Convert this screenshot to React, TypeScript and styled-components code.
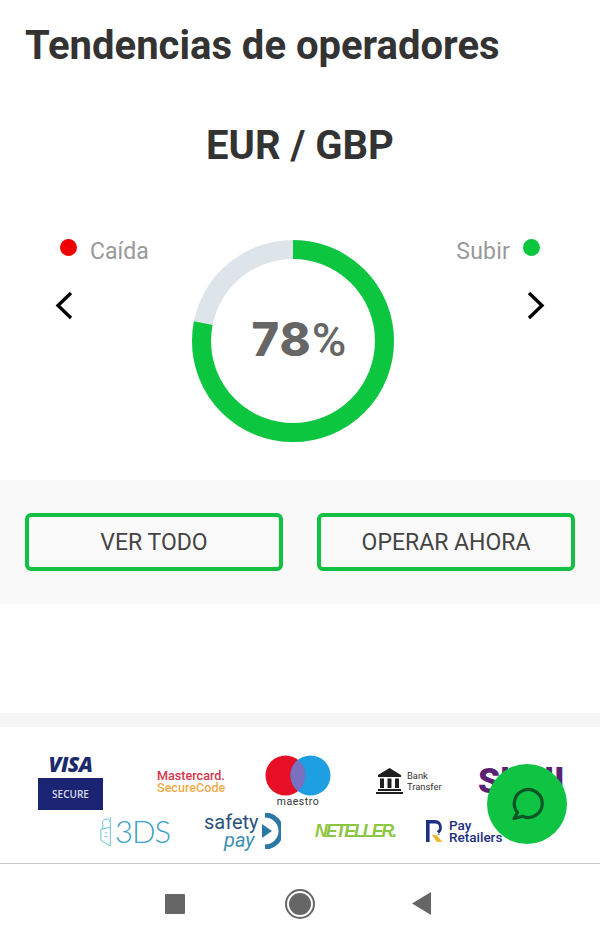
import React from "react";
import styled, { createGlobalStyle } from "styled-components";

const GlobalStyle = createGlobalStyle`
  html, body {
    margin: 0;
    padding: 0;
    background: #fff;
  }
  body {
    font-family: Roboto, "Liberation Sans", sans-serif;
  }
`;

const Page = styled.div`
  position: relative;
  width: 600px;
  height: 943px;
  overflow: hidden;
  display: flex;
  flex-direction: column;
  background: #fff;
`;

const PageTitle = styled.h1`
  margin: 0;
  height: 90px;
  padding-left: 25px;
  font-size: 40px;
  line-height: 92px;
  font-weight: 700;
  color: #333;
  white-space: nowrap;
`;

const PairName = styled.h2`
  margin: 0;
  height: 110px;
  font-size: 40px;
  line-height: 112px;
  font-weight: 700;
  color: #333;
  text-align: center;
`;

const TrendRow = styled.section`
  height: 280px;
  padding-top: 40px;
  box-sizing: border-box;
  display: grid;
  grid-template-columns: 192px 202px 1fr;
`;

const Side = styled.div<{ $right?: boolean }>`
  display: flex;
  flex-direction: column;
  align-items: ${({ $right }) => ($right ? "flex-end" : "flex-start")};
  padding: ${({ $right }) => ($right ? "0 54px 0 0" : "0 0 0 54px")};
`;

const Legend = styled.div<{ $right?: boolean }>`
  display: flex;
  align-items: center;
  gap: 13px;
  height: 22px;
  padding: ${({ $right }) => ($right ? "0 6px 0 0" : "0 0 0 6px")};
  margin-bottom: 28px;
  font-size: 23px;
  letter-spacing: ${({ $right }) => ($right ? "0.2px" : "0")};
  color: #999;
`;

const Dot = styled.span<{ $color: string }>`
  width: 17px;
  height: 17px;
  margin-top: -8px;
  border-radius: 50%;
  background: ${({ $color }) => $color};
`;

const Arrow = styled.svg`
  width: 20px;
  height: 30px;
  fill: none;
  stroke: #000;
  stroke-width: 3.4;
`;

const Gauge = styled.div`
  position: relative;
  width: 202px;
  height: 202px;
`;

const GaugeValue = styled.span`
  position: absolute;
  top: 0;
  left: 6px;
  width: 100%;
  line-height: 198px;
  text-align: center;
  font-family: Inter, Roboto, sans-serif;
  font-size: 47px;
  font-weight: 800;
  letter-spacing: 1px;
  color: #666;
`;

const GaugePercent = styled.span`
  font-family: Roboto, sans-serif;
  font-size: 47px;
  font-weight: 500;
  letter-spacing: 0;
`;

const ActionBand = styled.section`
  height: 124px;
  padding: 33px 25px 0;
  box-sizing: border-box;
  display: grid;
  grid-template-columns: 258px 258px;
  justify-content: space-between;
  align-items: start;
  background: #f9f9f9;
`;

const ActionButton = styled.button`
  height: 58px;
  padding: 0;
  border: 4px solid #14c044;
  border-radius: 6px;
  background: #fafafa;
  font-family: Roboto, "Liberation Sans", sans-serif;
  font-size: 23px;
  color: #444;
`;

const Spacer = styled.div`
  height: 109px;
`;

const Divider = styled.div`
  height: 14px;
  background: #f6f6f6;
`;

const Payments = styled.footer`
  height: 137px;
  box-sizing: border-box;
  padding-top: 27px;
  border-bottom: 1px solid #c9c9c9;
  display: flex;
  flex-direction: column;
  gap: 3px;
`;

const LogoRow = styled.div<{ $left: number; $columns: string; $height: number }>`
  display: grid;
  grid-template-columns: ${({ $columns }) => $columns};
  align-items: center;
  height: ${({ $height }) => $height}px;
  padding-left: ${({ $left }) => $left}px;
`;

const VisaLogo = styled.div`
  width: 65px;
  display: flex;
  flex-direction: column;
  align-items: center;
`;

const VisaWord = styled.span`
  font-family: "Open Sans", sans-serif;
  font-size: 21px;
  line-height: 21px;
  font-weight: 800;
  font-style: italic;
  color: #1b2a6b;
  letter-spacing: -0.5px;
`;

const VisaSecure = styled.span`
  width: 100%;
  height: 32px;
  margin-top: 3px;
  background: #1b2472;
  color: #d8dcf0;
  font-family: "Open Sans", sans-serif;
  font-size: 10px;
  font-weight: 600;
  line-height: 32px;
  text-align: center;
`;

const MastercardLogo = styled.div`
  font-size: 12.6px;
  line-height: 12px;
  font-weight: 500;
  white-space: nowrap;
  color: #d5364a;
`;

const SecureCode = styled.span`
  display: block;
  color: #f0ac47;
`;

const MaestroLogo = styled.div`
  width: 66px;
  display: flex;
  flex-direction: column;
  align-items: center;
  margin-top: -1px;
`;

const MaestroMark = styled.svg`
  width: 66px;
  height: 41px;
`;

const MaestroWord = styled.span`
  font-size: 10.5px;
  line-height: 12px;
  letter-spacing: 0.5px;
  color: #333;
`;

const BankLogo = styled.div`
  display: flex;
  align-items: center;
  gap: 4px;
  margin-top: -3px;
`;

const BankIcon = styled.svg`
  width: 27px;
  height: 26px;
  flex: none;
`;

const BankText = styled.span`
  font-size: 9.4px;
  line-height: 11px;
  color: #333;
`;

const SkrillWord = styled.span`
  font-size: 35px;
  line-height: 30px;
  font-weight: 900;
  color: #5b1f74;
  letter-spacing: 0.6px;
`;

const ThreeDsLogo = styled.div`
  display: flex;
  align-items: center;
  gap: 1px;
`;

const LockIcon = styled.svg`
  width: 14px;
  height: 33px;
  flex: none;
  fill: none;
  stroke: #63bcd3;
  stroke-width: 1;
`;

const ThreeDsWord = styled.span`
  font-family: Lato, sans-serif;
  font-size: 31px;
  line-height: 32px;
  font-weight: 300;
  color: #3fa1c6;
  letter-spacing: -1px;
`;

const SafetyLogo = styled.div`
  display: flex;
  align-items: center;
`;

const SafetyWords = styled.div`
  width: 58px;
  display: flex;
  flex-direction: column;
  font-size: 20px;
  line-height: 18px;
`;

const SafetyWord = styled.span`
  color: #2d5279;
`;

const PayWord = styled.span`
  padding-left: 20px;
  font-style: italic;
  color: #3c8fb3;
`;

const SafetyMark = styled.svg`
  width: 19px;
  height: 36px;
  flex: none;
`;

const NetellerWord = styled.span`
  font-family: "Liberation Sans", sans-serif;
  font-size: 17.5px;
  line-height: 20px;
  font-weight: 700;
  font-style: italic;
  color: #8cc540;
  letter-spacing: -1.9px;
  white-space: nowrap;
`;

const PayRetailersLogo = styled.div`
  display: flex;
  align-items: center;
  gap: 6px;
`;

const PayMark = styled.svg`
  width: 17px;
  height: 22px;
  flex: none;
`;

const PayText = styled.span`
  font-size: 13.5px;
  line-height: 12px;
  font-weight: 500;
  color: #1c2f80;
  white-space: nowrap;
`;

const NavBar = styled.nav`
  flex: 1;
  display: flex;
  align-items: center;
  padding-left: 165px;
`;

const NavSquare = styled.span`
  width: 20px;
  height: 20px;
  border-radius: 1px;
  background: #666;
`;

const NavCircle = styled.span`
  width: 30px;
  height: 30px;
  box-sizing: border-box;
  margin: 0 97px 0 100px;
  border: 2px solid #666;
  border-radius: 50%;
  padding: 2px;
  display: flex;
`;

const NavCircleInner = styled.span`
  flex: 1;
  border-radius: 50%;
  background: #666;
`;

const NavBack = styled.svg`
  width: 20px;
  height: 23px;
  fill: #666;
`;

const ChatFab = styled.button`
  position: absolute;
  left: 487px;
  top: 764px;
  width: 80px;
  height: 80px;
  padding: 0;
  border: none;
  border-radius: 50%;
  background: #0fc443;
  display: flex;
  align-items: center;
  justify-content: center;
`;

const RADIUS = 91.5;
const CIRC = 2 * Math.PI * RADIUS;
const percent = 78;

const App: React.FC = () => {
  return (
    <Page>
      <GlobalStyle />
      <PageTitle>Tendencias de operadores</PageTitle>
      <PairName>EUR / GBP</PairName>

      <TrendRow>
        <Side>
          <Legend>
            <Dot $color="#f00000" />
            Caída
          </Legend>
          <Arrow viewBox="0 0 20 30">
            <path d="M17 3 L4 15.5 L17 28" />
          </Arrow>
        </Side>
        <Gauge>
          <svg width="202" height="202" viewBox="0 0 202 202">
            <circle cx="101" cy="101" r={RADIUS} fill="none" stroke="#dde5ea" strokeWidth="19" />
            <circle
              cx="101"
              cy="101"
              r={RADIUS}
              fill="none"
              stroke="#0cc63f"
              strokeWidth="19"
              strokeDasharray={`${(CIRC * percent) / 100} ${CIRC}`}
              transform="rotate(-90 101 101)"
            />
          </svg>
          <GaugeValue>
            {percent}
            <GaugePercent>%</GaugePercent>
          </GaugeValue>
        </Gauge>
        <Side $right>
          <Legend $right>
            Subir
            <Dot $color="#0cc63f" />
          </Legend>
          <Arrow viewBox="0 0 20 30">
            <path d="M3 3 L16 15.5 L3 28" />
          </Arrow>
        </Side>
      </TrendRow>

      <ActionBand>
        <ActionButton>VER TODO</ActionButton>
        <ActionButton>OPERAR AHORA</ActionButton>
      </ActionBand>

      <Spacer />
      <Divider />

      <Payments>
        <LogoRow $left={38} $columns="119px 108px 111px 102px 83px" $height={55}>
          <VisaLogo>
            <VisaWord>VISA</VisaWord>
            <VisaSecure>SECURE</VisaSecure>
          </VisaLogo>
          <MastercardLogo>
            Mastercard.
            <SecureCode>SecureCode</SecureCode>
          </MastercardLogo>
          <MaestroLogo>
            <MaestroMark viewBox="0 0 66 41">
              <circle cx="20.5" cy="20.5" r="20" fill="#e60f26" />
              <circle cx="45.5" cy="20.5" r="20" fill="#1d9fe2" />
              <path d="M33 4.9a20 20 0 0 1 0 31.2a20 20 0 0 1 0-31.2z" fill="#7a70c0" />
            </MaestroMark>
            <MaestroWord>maestro</MaestroWord>
          </MaestroLogo>
          <BankLogo>
            <BankIcon viewBox="0 0 27 26">
              <path
                fill="#1f1f1f"
                d="M13.5 0 L25 7 V9 H2 V7 Z M4 10.5 H8 V20 H4 Z M11.5 10.5 H15.5 V20 H11.5 Z M19 10.5 H23 V20 H19 Z M2 21 H25 V23 H2 Z M0 24 H27 V26 H0 Z"
              />
            </BankIcon>
            <BankText>
              Bank
              <br />
              Transfer
            </BankText>
          </BankLogo>
          <SkrillWord>Skrill</SkrillWord>
        </LogoRow>

        <LogoRow $left={100} $columns="104px 111px 111px 77px" $height={38}>
          <ThreeDsLogo>
            <LockIcon viewBox="0 0 15 33">
              <path d="M11 1 V32 L1 26 V14 L11 12 M3 14 V9 A4 4 0 0 1 11 6" />
              <path d="M5 18 H8 M5 22 H8" />
            </LockIcon>
            <ThreeDsWord>3DS</ThreeDsWord>
          </ThreeDsLogo>
          <SafetyLogo>
            <SafetyWords>
              <SafetyWord>safety</SafetyWord>
              <PayWord>pay</PayWord>
            </SafetyWords>
            <SafetyMark viewBox="0 0 19 36">
              <path d="M3 2 A16 16 0 0 1 3 34" fill="none" stroke="#2b78a6" strokeWidth="5" />
              <path d="M0 11 L10 18 L0 25 Z" fill="#2b78a6" />
            </SafetyMark>
          </SafetyLogo>
          <NetellerWord>NETELLER.</NetellerWord>
          <PayRetailersLogo>
            <PayMark viewBox="0 0 17 22">
              <path
                fill="#1c2f80"
                d="M0 0 H9 A7.5 7.5 0 0 1 11 14.5 L14 14.5 L10.5 11 A3.8 3.8 0 0 0 9 3.6 H3.6 V22 H0 Z"
              />
              <path fill="#f3b72c" d="M6 15 H10.5 L16.5 22 H11 Z" />
            </PayMark>
            <PayText>
              Pay
              <br />
              Retailers
            </PayText>
          </PayRetailersLogo>
        </LogoRow>
      </Payments>

      <NavBar>
        <NavSquare />
        <NavCircle>
          <NavCircleInner />
        </NavCircle>
        <NavBack viewBox="0 0 20 23">
          <path d="M0 11.5 L19 0 V23 Z" />
        </NavBack>
      </NavBar>

      <ChatFab aria-label="chat">
        <svg width="36" height="36" viewBox="0 0 36 36" fill="none">
          <path
            d="M8.5 26.5 A14 14 0 1 1 13.5 30.3 L5 32.5 Z"
            stroke="#0b5526"
            strokeWidth="3.2"
            strokeLinejoin="round"
          />
        </svg>
      </ChatFab>
    </Page>
  );
};

export default App;
